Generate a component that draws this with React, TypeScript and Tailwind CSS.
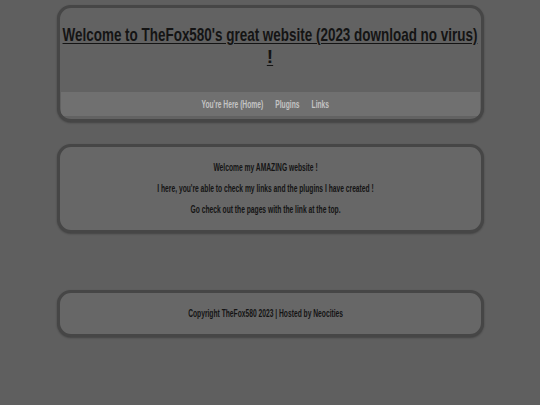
import React from 'react'

const font = { fontFamily: '"Liberation Sans", Arial, sans-serif' }

// no narrow face installed, so squeeze each text block horizontally
const squeeze = 'whitespace-nowrap scale-x-[0.67]'

export default function App() {
  return (
    <div className="min-h-[405px] bg-[#5f5f5f] pt-[5px]" style={font}>
      {/* Header */}
      <header className="mx-auto w-[427px] h-[117px] rounded-[14px] border-[3px] border-[#464646] bg-[#626262] shadow-[0_1px_2px_rgba(0,0,0,0.3)] flex flex-col overflow-hidden">
        <h1 className="flex-1 pt-[16px] flex flex-col items-center text-[19px] leading-[22px] font-bold text-[#141414] underline underline-offset-2">
          <span className="inline-block whitespace-nowrap scale-x-[0.708]">
            Welcome to TheFox580's great website (2023 download no virus)
          </span>
          <span className="inline-block">!</span>
        </h1>
        <nav className="mx-[1px] mb-[3px] h-[24px] pr-[10px] bg-[#707070] flex items-center justify-center text-[10px] font-bold text-[#c4c4c4]">
          <div className={`flex gap-[18px] ${squeeze}`}>
            <a>You're Here (Home)</a>
            <a>Plugins</a>
            <a>Links</a>
          </div>
        </nav>
      </header>

      {/* Main */}
      <main className="mx-auto mt-[22px] w-[427px] h-[89px] pr-[9px] rounded-[14px] border-[3px] border-[#464646] bg-[#676767] shadow-[0_1px_2px_rgba(0,0,0,0.3)] flex items-center justify-center text-[10px] leading-[13px] font-bold text-[#141414]">
        <div className={`flex flex-col items-center gap-[8px] ${squeeze}`}>
          <p>Welcome my AMAZING website !</p>
          <p>I here, you're able to check my links and the plugins I have created !</p>
          <p>Go check out the pages with the link at the top.</p>
        </div>
      </main>

      {/* Footer */}
      <footer className="mx-auto mt-[57px] w-[427px] h-[47px] pr-[9px] rounded-[14px] border-[3px] border-[#464646] bg-[#676767] shadow-[0_1px_2px_rgba(0,0,0,0.3)] flex items-center justify-center text-[10px] font-bold text-[#141414]">
        <p className={squeeze}>Copyright TheFox580 2023 | Hosted by Neocities</p>
      </footer>
    </div>
  )
}
